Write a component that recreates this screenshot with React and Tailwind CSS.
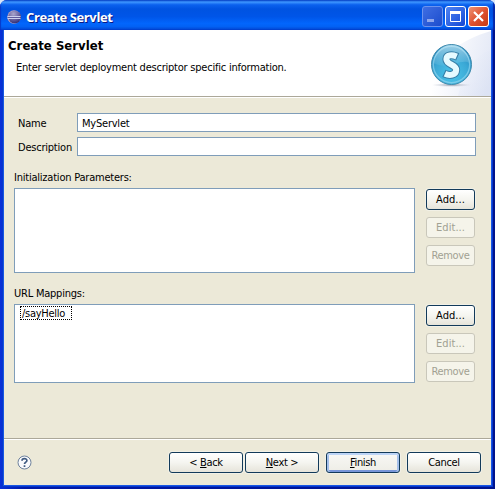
import React from "react";

function Button({ children, variant = "normal", className = "", spacing = "tracking-[-0.35px]" }) {
  const look = {
    normal: "border-[#123a5a] text-black bg-linear-to-b from-white via-[#f5f5f0] to-[#e6e4da] shadow-[0_0_0_1px_#f1f0e6]",
    primary: "border-[#123a5a] text-black bg-linear-to-b from-[#f8f8f5] to-[#eeede6] shadow-[inset_0_2px_0_#bcd4f6,inset_2px_0_0_#a5c0ea,inset_-2px_0_0_#a5c0ea,inset_0_-2px_0_#7795d8,0_0_0_1px_#f1f0e6]",
    disabled: "border-[#c9c7ba] text-[#a1a192] bg-[#f5f4ea]",
  }[variant];
  return (
    <button className={`flex h-[21px] items-center justify-center whitespace-nowrap rounded-[3px] border pt-px ${spacing} ${look} ${className}`}>
      <span>{children}</span>
    </button>
  );
}

function ListSection({ title, height, gap, children }) {
  return (
    <section className={gap}>
      <div className="h-[18px] pt-px leading-[14px]">{title}</div>
      <div className="flex gap-[11px]">
        <div className={`w-[401px] border border-[#7f9db9] bg-white ${height}`}>{children}</div>
        <div className="flex w-[49px] flex-col gap-[7px] pt-px">
          <Button spacing="tracking-[0.05px]">Add...</Button>
          <Button variant="disabled" spacing="tracking-[0.05px]">Edit...</Button>
          <Button variant="disabled">Remove</Button>
        </div>
      </div>
    </section>
  );
}

function EclipseIcon() {
  return (
    <svg className="h-4 w-4 shrink-0" viewBox="0 0 16 16">
      <defs>
        <radialGradient id="ecl" cx="0.4" cy="0.25" r="0.8">
          <stop offset="0" stopColor="#aaa6cc" />
          <stop offset="0.5" stopColor="#6f6aa6" />
          <stop offset="1" stopColor="#2c2870" />
        </radialGradient>
      </defs>
      <circle cx="8" cy="8" r="6.7" fill="#b79fb9" />
      <circle cx="8.7" cy="8" r="6.3" fill="url(#ecl)" />
      <path d="M1.5 7.5h13M1.5 9.5h13" stroke="#ccd0ee" strokeWidth="1" />
      <path d="M2 8.5h12" stroke="#5f5a9c" strokeWidth="1" />
    </svg>
  );
}

function ServletLogo() {
  const letter = "M56.6 26.4C52 24.4 46.4 24.8 46.4 29.2 46.4 34.8 56.4 34.4 56.2 39.8 55.9 45.2 49.6 45.9 45 43.8";
  return (
    <svg className="block h-[66px] w-[91px]" viewBox="0 0 91 66">
      <defs>
        <linearGradient id="sweep" gradientUnits="userSpaceOnUse" x1="38" y1="30" x2="91" y2="42">
          <stop offset="0" stopColor="#fff" />
          <stop offset="1" stopColor="#e3e8f6" />
        </linearGradient>
        <linearGradient id="sweepInner" gradientUnits="userSpaceOnUse" x1="58" y1="35" x2="91" y2="55">
          <stop offset="0" stopColor="#f2f4fb" />
          <stop offset="1" stopColor="#d6def2" />
        </linearGradient>
        <radialGradient id="ball" cx="0.5" cy="0.75" r="0.7">
          <stop offset="0" stopColor="#4cc6ea" />
          <stop offset="0.6" stopColor="#3ba9d6" />
          <stop offset="1" stopColor="#2488bf" />
        </radialGradient>
        <linearGradient id="gloss" x1="0" y1="0" x2="0" y2="1">
          <stop offset="0" stopColor="#c9eaf6" stopOpacity="0.75" />
          <stop offset="1" stopColor="#a8def2" stopOpacity="0.1" />
        </linearGradient>
        <radialGradient id="shade">
          <stop offset="0" stopColor="#8f98a5" />
          <stop offset="1" stopColor="#c8cedc" stopOpacity="0" />
        </radialGradient>
      </defs>
      <path d="M91 1C62 9 34 28 14 66H91Z" fill="url(#sweep)" />
      <path d="M91 20C76 24 64 40 58 66H91Z" fill="url(#sweepInner)" opacity="0.5" />
      <ellipse cx="51.5" cy="55" rx="20" ry="2" fill="url(#shade)" />
      <circle cx="51.5" cy="34.5" r="20" fill="url(#ball)" stroke="#418bad" />
      <circle cx="51.5" cy="34.5" r="18.2" fill="none" stroke="#8fd4ee" strokeWidth="1.4" opacity="0.7" />
      <path d="M33.5 33A18 18 0 0 1 69.5 33C61 28 47 41 33.5 33Z" fill="url(#gloss)" />
      <path d={letter} fill="none" stroke="#397fa7" strokeWidth="8" />
      <path d="M56.6 26.4l1.1.5M45 43.8l-1.1-.5" stroke="#397fa7" strokeWidth="8" />
      <path d={letter} fill="none" stroke="#e6faff" strokeWidth="6" />
    </svg>
  );
}

function CaptionButton({ color, children }) {
  return (
    <div className={`h-[21px] w-[21px] rounded-[3px] border ${color}`}>
      <svg className="block h-[19px] w-[19px]" viewBox="0 0 19 19" fill="none">{children}</svg>
    </div>
  );
}

function Field({ label, value, top }) {
  return (
    <div className={`flex h-[19px] items-center ${top}`}>
      <label className="w-[59px] whitespace-nowrap pt-[2px]">{label}</label>
      <div className="flex h-[19px] w-[399px] items-center border border-[#7f9db9] bg-white pl-[4px] pt-[2px]">{value}</div>
    </div>
  );
}

export default function App() {
  return (
    <div className="h-[489px] w-[495px] bg-[#d8e6f8] font-['DejaVu_Sans_Condensed','DejaVu_Sans',sans-serif] text-[11px] leading-[14px] tracking-[-0.22px] text-black [font-stretch:condensed]">
      <div className="flex h-full flex-col overflow-hidden rounded-t-[7px] bg-[#0831d9]">
        <header className="flex h-[30px] shrink-0 items-center bg-[linear-gradient(180deg,#0848c8_0%,#3d95ff_7%,#0b61ee_16%,#0053e1_30%,#0055e8_55%,#0266fc_78%,#0262f5_88%,#0144d0_100%)] pl-[6px] pr-[6px] pt-[3px] shadow-[inset_-2px_0_1px_#0526a8,inset_1px_0_1px_#0838c8]">
          <EclipseIcon />
          <h1 className="ml-[4px] flex-1 whitespace-nowrap font-['Open_Sans','Noto_Sans',sans-serif] text-[13px] font-bold tracking-[-0.38px] text-white [font-stretch:normal] [text-shadow:1px_1px_#0a1883]">Create Servlet</h1>
          <div className="flex gap-[2px]">
            <CaptionButton color="border-[#6c93ee] bg-linear-to-br from-[#3f6ee3] to-[#1c4ccd]">
              <path d="M4 13.5h7" stroke="#8ea6ec" strokeWidth="3" />
            </CaptionButton>
            <CaptionButton color="border-white bg-linear-to-br from-[#5084f3] to-[#1446d4]">
              <path d="M4.5 5v9.5h10V5" stroke="#fff" />
              <path d="M4 5.5h11" stroke="#fff" strokeWidth="3" />
            </CaptionButton>
            <CaptionButton color="border-white bg-linear-to-br from-[#ed9273] via-[#df5230] to-[#c43a12]">
              <path d="m5 5 9 9m0-9-9 9" stroke="#fff" strokeWidth="2.2" />
            </CaptionButton>
          </div>
        </header>
        <div className="flex h-[459px] overflow-hidden bg-linear-to-r from-[#0831d9] via-[#0018a8] via-5% to-[#00138c] px-[4px] pb-[4px]">
          <main className="flex w-[487px] flex-col bg-[#ece9d8] shadow-[0_0_0_1px_#1857e4,0_0_0_2px_#0637cc]">
            <section className="flex h-[68px] shrink-0 justify-between border-b border-b-white bg-white shadow-[inset_0_-1px_#aca899]">
              <div className="pl-[4px] pt-[8px]">
                <h2 className="whitespace-nowrap text-[13px] font-bold leading-[16px] tracking-[0.02px]">Create Servlet</h2>
                <p className="ml-[8px] mt-[7px] whitespace-nowrap">Enter servlet deployment descriptor specific information.</p>
              </div>
              <ServletLogo />
            </section>
            <div className="h-[340px] pl-[10px] pt-[15px]">
              <div className="pl-[4px]">
                <Field label="Name" value="MyServlet" top="" />
                <Field label="Description" top="mt-[5px]" />
              </div>
              <ListSection title="Initialization Parameters:" height="h-[85px]" gap="mt-[14px]" />
              <ListSection title="URL Mappings:" height="h-[79px]" gap="mt-[13px]">
                <div className="ml-[5px] mt-px flex h-[14px] w-[52px] items-center border border-dotted border-black pl-px pt-[2px] tracking-[-0.28px]">/sayHello</div>
              </ListSection>
            </div>
            <footer className="flex h-[47px] items-start border-t border-t-[#aca899] pl-[13px] pt-[13px] shadow-[inset_0_1px_white]">
              <svg className="mt-[3px] h-[15px] w-[15px] shrink-0" viewBox="0 0 15 15" fill="none">
                <circle cx="7.5" cy="7.5" r="6.5" fill="#f9fafc" stroke="#6d809b" />
                <path d="M5 5.7C5 2.8 10 2.9 9.9 5.6 9.8 7.1 7.5 7.2 7.5 9.1M7.5 10.3v1.7" stroke="#405b81" strokeWidth="1.7" />
              </svg>
              <div className="ml-[137px] flex">
                <Button className="w-[74px]">&lt; <u>B</u>ack</Button>
                <Button className="ml-[2px] w-[74px]"><u>N</u>ext &gt;</Button>
                <Button variant="primary" className="ml-[7px] w-[74px]"><u>F</u>inish</Button>
                <Button className="ml-[7px] w-[74px]">Cancel</Button>
              </div>
            </footer>
          </main>
        </div>
      </div>
    </div>
  );
}
